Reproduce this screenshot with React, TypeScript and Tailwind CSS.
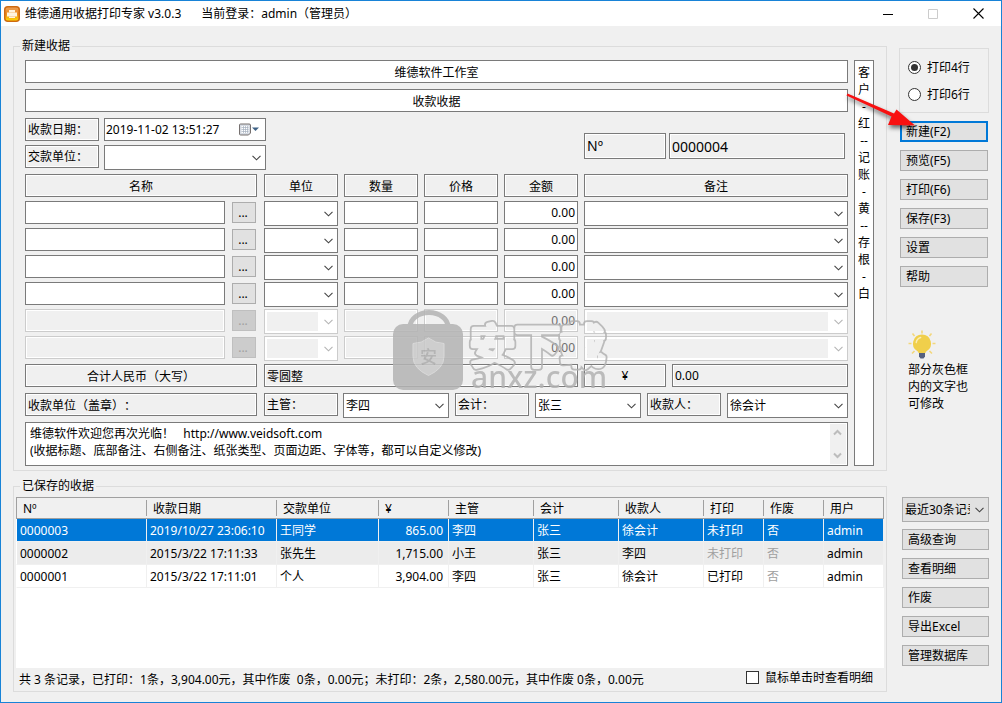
import { ReactNode } from 'react';

const box =
  'block min-w-0 rounded-none border border-[#7a7a7a] bg-[#f0f0f0] px-0.5 text-black shadow-[inset_0_0_0_1px_#fff] outline-none';
const field =
  'block min-w-0 rounded-none border border-[#7a7a7a] bg-white px-0.5 text-black outline-none disabled:border-[#ccc] disabled:bg-[#f0f0f0] disabled:text-[#6d6d6d] disabled:shadow-[inset_0_0_0_1px_#fff]';

function Chevron({ faded = false }: { faded?: boolean }) {
  return (
    <svg
      className="pointer-events-none absolute top-1/2 right-1 -mt-[3px]"
      width="9"
      height="6"
      viewBox="0 0 9 6"
      fill="none"
      stroke={faded ? '#b4b4b4' : '#444'}
      strokeWidth="1.1"
    >
      <path d="M0.5 0.8L4.5 4.800L8.500 0.8" />
    </svg>
  );
}

function Combo({
  label,
  id,
  options = [''],
  disabled = false,
  className = '',
}: {
  label?: string;
  id?: string;
  options?: string[];
  disabled?: boolean;
  className?: string;
}) {
  return (
    <div className={'relative h-[25px] border bg-white ' + (disabled ? 'border-[#ccc] ' : 'border-[#7a7a7a] ') + className}>
      <select
        id={id}
        aria-label={label}
        disabled={disabled}
        className={
          'block h-full w-full appearance-none rounded-none outline-none ' +
          (disabled
            ? 'border-2 border-r-[19px] border-white bg-[#f0f0f0] opacity-100'
            : 'bg-white pr-5 pl-0.5 text-black')
        }
      >
        {options.map((o) => (
          <option key={o}>{o}</option>
        ))}
      </select>
      <Chevron faded={disabled} />
    </div>
  );
}

function PushButton({ children, primary = false }: { children: ReactNode; primary?: boolean }) {
  return (
    <button
      type="button"
      className={
        'block h-[21px] w-full bg-[#e1e1e1] text-left leading-[18px] ' +
        (primary ? 'border-2 border-[#0078d7] px-1' : 'border border-[#adadad] px-[5px] pt-px')
      }
    >
      {children}
    </button>
  );
}

function TitleBar() {
  return (
    <header className="flex h-[25px] items-center bg-white pl-[3px]">
      <svg width="16" height="16" viewBox="0 0 16 16">
        <defs>
          <linearGradient id="appIcon" x1="0" y1="0" x2="0" y2="1">
            <stop offset="0" stopColor="#e9a05c" />
            <stop offset="0.5" stopColor="#f08a1c" />
            <stop offset="1" stopColor="#ffe100" />
          </linearGradient>
        </defs>
        <rect x="0.75" y="0.75" width="14.5" height="14.5" rx="3" fill="url(#appIcon)" stroke="#cf6a10" strokeWidth="1.5" />
        <path d="M5 4h6v2.500h2v4h-2v1.500H5v-1.500H3v-4h2z" fill="#fff3dc" />
        <path d="M5 6.500h6M5 10.500h6" stroke="#f5c58a" strokeWidth="0.6" />
      </svg>
      <h1 className="ml-[5px]">维德通用收据打印专家 v3.0.3</h1>
      <span className="ml-5">当前登录：admin（管理员）</span>
      <div className="ml-auto flex">
        <button type="button" aria-label="最小化" className="flex h-6 w-[46px] items-center justify-center">
          <svg width="10" height="10" viewBox="0 0 10 10"><path d="M0 5.500h10" stroke="#000" /></svg>
        </button>
        <button type="button" aria-label="最大化" disabled className="flex h-6 w-11 items-center justify-center">
          <svg width="10" height="10" viewBox="0 0 10 10"><path d="M0.500 0.500h9v9h-9z" fill="none" stroke="#ccc" /></svg>
        </button>
        <button type="button" aria-label="关闭" className="flex h-6 w-[46px] items-center justify-center">
          <svg width="11" height="11" viewBox="0 0 11 11"><path d="M0.500 0.500l10 10M10.500 0.500l-10 10" stroke="#000" strokeWidth="1.1" /></svg>
        </button>
      </div>
    </header>
  );
}

function ItemRow({ index }: { index: number }) {
  const disabled = index > 4;
  return (
    <div className="flex h-[25px] items-start">
      <input aria-label={`名称 ${index}`} disabled={disabled} className={field + ' h-[23px] w-[200px]'} />
      <button
        type="button"
        disabled={disabled}
        aria-label={`选择名称 ${index}`}
        className="mt-px ml-[7px] h-[21px] w-6 border border-[#adadad] bg-[#e1e1e1] pr-0.5 text-center leading-[19px] disabled:border-[#bfbfbf] disabled:bg-[#ccc] disabled:text-[#a0a0a0]"
      >
        ...
      </button>
      <Combo label={`单位 ${index}`} disabled={disabled} className="ml-2 w-[74px]" />
      <input aria-label={`数量 ${index}`} disabled={disabled} className={field + ' ml-1.5 h-[23px] w-[74px]'} />
      <input aria-label={`价格 ${index}`} disabled={disabled} className={field + ' ml-1.5 h-[23px] w-[74px]'} />
      <input
        aria-label={`金额 ${index}`}
        disabled={disabled}
        defaultValue="0.00"
        className={field + ' ml-1.5 h-[23px] w-[74px] text-right'}
      />
      <Combo label={`备注 ${index}`} disabled={disabled} className="ml-1.5 flex-1" />
    </div>
  );
}

function ReceiptForm() {
  const head = box + ' h-[23px] text-center';
  return (
    <fieldset className="min-w-0 flex-1 border border-[#dcdcdc]">
      <legend className="ml-1.5 h-4 px-0.5 leading-4">新建收据</legend>
      <div className="flex gap-1.5 pt-1.5 pr-3 pb-1 pl-[11px]">
        <div className="min-w-0 flex-1">
          <input aria-label="单位名称" defaultValue="维德软件工作室" className={field + ' h-[23px] w-full text-center'} />
          <input aria-label="收据标题" defaultValue="收款收据" className={field + ' mt-1.5 h-[23px] w-full text-center'} />

          <div className="mt-1.5 flex">
            <div className="w-[559px] shrink-0">
              <div className="flex gap-[5px]">
                <label htmlFor="date" className={box + ' h-[23px] w-[74px] leading-[21px]'}>收款日期：</label>
                <div className="flex h-[23px] w-[162px] items-center border border-[#7a7a7a] bg-white">
                  <input id="date" defaultValue="2019-11-02 13:51:27" className="w-[134px] bg-white pl-px outline-none" />
                  <button type="button" aria-label="打开日历" className="flex items-center">
                    <svg width="21" height="13" viewBox="0 0 21 13">
                      <path d="M1.500 1h8.500q1.500 0 1.500 1v8l-2 2h-8q-1 0-1-1v-9q0-1 1-1z" fill="#d5dae2" stroke="#76706f" />
                      <path d="M2.500 3h7v7h-7z" fill="#fff" />
                      <path d="M2.500 4.500h7M2.500 6.500h7M2.500 8.500h7M4.500 3v7M6.500 3v7M8.500 3v7" stroke="#a5b0bf" strokeWidth="0.7" />
                      <path d="M13 4.500h7l-3.500 3.500z" fill="#3f6286" />
                    </svg>
                  </button>
                </div>
              </div>
              <div className="mt-1 flex gap-[5px]">
                <label htmlFor="payer" className={box + ' h-[23px] w-[74px] leading-[21px]'}>交款单位：</label>
                <Combo id="payer" className="w-[162px]" />
              </div>
            </div>
            <div className="mt-[15px] flex min-w-0 flex-1 gap-[3px] pr-[3px] text-sm">
              <label htmlFor="number" className={box + ' h-[26px] w-[82px] shrink-0 leading-6'}>Nº</label>
              <input id="number" readOnly defaultValue="0000004" className={box + ' h-[26px] w-0 flex-1'} />
            </div>
          </div>

          <div className="mt-1 flex gap-1.5">
            <input aria-label="名称标题" defaultValue="名称" className={head + ' mr-px w-[232px]'} />
            <input aria-label="单位标题" defaultValue="单位" className={head + ' w-[74px]'} />
            <input aria-label="数量标题" defaultValue="数量" className={head + ' w-[74px]'} />
            <input aria-label="价格标题" defaultValue="价格" className={head + ' w-[74px]'} />
            <input aria-label="金额标题" defaultValue="金额" className={head + ' w-[74px]'} />
            <input aria-label="备注标题" defaultValue="备注" className={head + ' flex-1'} />
          </div>

          <div className="mt-1 flex flex-col gap-0.5">
            {[1, 2, 3, 4, 5, 6].map((i) => (
              <ItemRow key={i} index={i} />
            ))}
          </div>

          <div className="mt-[3px] flex gap-1.5">
            <input aria-label="合计标题" defaultValue="合计人民币（大写）" className={head + ' mr-px w-[232px]'} />
            <input aria-label="大写金额" readOnly defaultValue="零圆整" className={box + ' h-[23px] w-[314px]'} />
            <input aria-label="货币符号" defaultValue="¥" className={head + ' w-[82px]'} />
            <input aria-label="合计金额" readOnly defaultValue="0.00" className={box + ' h-[23px] flex-1'} />
          </div>

          <div className="mt-1.5 flex gap-[5px]">
            <input aria-label="收款单位" defaultValue="收款单位（盖章）：" className={box + ' mr-0.5 h-[23px] w-[232px]'} />
            <label htmlFor="manager" className={box + ' h-[23px] w-[74px] leading-[21px]'}>主管：</label>
            <Combo id="manager" options={['李四']} className="mr-px w-[106px]" />
            <label htmlFor="accountant" className={box + ' mr-px h-[23px] w-[74px] leading-[21px]'}>会计：</label>
            <Combo id="accountant" options={['张三']} className="mr-px w-[106px]" />
            <label htmlFor="payee" className={box + ' mr-px h-[23px] w-[74px] leading-[21px]'}>收款人：</label>
            <Combo id="payee" options={['徐会计']} className="flex-1" />
          </div>

          <div className="mt-1 flex h-11 border border-[#7a7a7a] bg-white">
            <textarea
              aria-label="底部备注"
              className="block h-full flex-1 resize-none overflow-hidden bg-white pt-0.5 pl-1 leading-[17px] outline-none"
              defaultValue={
                '维德软件欢迎您再次光临！   http://www.veidsoft.com\n(收据标题、底部备注、右侧备注、纸张类型、页面边距、字体等，都可以自定义修改)'
              }
            />
            <div className="m-px flex w-4 flex-col items-center justify-between bg-[#f0f0f0] py-[5px] pr-px">
              <svg width="9" height="7" viewBox="0 0 9 7" fill="none" stroke="#bcbcbc" strokeWidth="2"><path d="M1 5.500L4.500 2L8 5.500" /></svg>
              <svg width="9" height="7" viewBox="0 0 9 7" fill="none" stroke="#bcbcbc" strokeWidth="2"><path d="M1 1.500L4.500 5L8 1.500" /></svg>
            </div>
          </div>
        </div>
        <textarea
          aria-label="右侧备注"
          className="block w-5 resize-none overflow-hidden border border-[#7a7a7a] bg-white pt-[3px] text-center leading-[17px] outline-none"
          defaultValue={'客\n户\n-\n红\n--\n记\n账\n-\n黄\n--\n存\n根\n-\n白'}
        />
      </div>
    </fieldset>
  );
}

function Bulb() {
  return (
    <svg width="28" height="29" viewBox="0 0 28 29">
      <g stroke="#f3d77c" strokeWidth="1.6">
        <path d="M14 0.500v3M4.500 3.500l2 2.500M23.500 3.500l-2 2.500M0.500 13.500h3M24.500 13.500h3M4 23.500l2.500-2.500M24 23.500l-2.500-2.500" />
      </g>
      <path d="M14 4.500a9 9 0 0 1 4.500 16.800q-1 .7-1 1.700h-7q0-1-1-1.700A9 9 0 0 1 14 4.500z" fill="#f0cf4b" />
      <path d="M8.200 12.500q.8-4 4.500-5" fill="none" stroke="#fbeeb5" strokeWidth="1.4" strokeLinecap="round" />
      <path d="M11 23h6v3.500l-1.500 2h-3l-1.500-2z" fill="#556080" />
    </svg>
  );
}

function RadioLine({ label, checked = false }: { label: string; checked?: boolean }) {
  return (
    <label className="flex items-center gap-1.5">
      <span className="relative block h-[13px] w-[13px]">
        <input
          type="radio"
          name="lines"
          defaultChecked={checked}
          className="peer block h-[13px] w-[13px] appearance-none rounded-full border border-[#333] bg-white"
        />
        <span className="pointer-events-none absolute inset-[3px] hidden rounded-full bg-[#333] peer-checked:block" />
      </span>
      {label}
    </label>
  );
}

function FormActions() {
  return (
    <aside className="w-[90px] shrink-0">
      <div className="mt-2.5 flex h-[65px] flex-col justify-center gap-2.5 border border-[#dcdcdc] pl-2 leading-[17px]">
        <RadioLine label="打印4行" checked />
        <RadioLine label="打印6行" />
      </div>
      <div className="mt-2 flex flex-col gap-2 px-px">
        <PushButton primary>新建(F2)</PushButton>
        <PushButton>预览(F5)</PushButton>
        <PushButton>打印(F6)</PushButton>
        <PushButton>保存(F3)</PushButton>
        <PushButton>设置</PushButton>
        <PushButton>帮助</PushButton>
      </div>
      <div className="mt-[43px] pl-[9px]">
        <Bulb />
        <p className="mt-0.5 w-[61px] leading-[17px]">部分灰色框内的文字也可修改</p>
      </div>
    </aside>
  );
}

const columns = [
  { title: 'Nº', width: 'w-[131px]' },
  { title: '收款日期', width: 'w-[130px]' },
  { title: '交款单位', width: 'w-[102px]' },
  { title: '¥', width: 'w-[70px]' },
  { title: '主管', width: 'w-[85px]' },
  { title: '会计', width: 'w-[85px]' },
  { title: '收款人', width: 'w-[85px]' },
  { title: '打印', width: 'w-[60px]' },
  { title: '作废', width: 'w-[60px]' },
  { title: '用户', width: 'w-auto' },
];

const receipts = [
  ['0000003', '2019/10/27 23:06:10', '王同学', '865.00', '李四', '张三', '徐会计', '未打印', '否', 'admin'],
  ['0000002', '2015/3/22 17:11:33', '张先生', '1,715.00', '小王', '张三', '李四', '未打印', '否', 'admin'],
  ['0000001', '2015/3/22 17:11:01', '个人', '3,904.00', '李四', '张三', '徐会计', '已打印', '否', 'admin'],
];

const rowStyles = ['bg-[#0078d7] text-white', 'bg-[#ececec]', 'bg-white'];

function SavedReceipts() {
  return (
    <fieldset className="flex min-w-0 flex-1 flex-col border border-[#dcdcdc]">
      <legend className="ml-1.5 h-4 px-0.5 leading-4">已保存的收据</legend>
      <div className="mx-0.5 mt-[3px] flex-1 bg-white">
        <table className="w-full table-fixed border-separate border-spacing-0">
          <thead>
            <tr className="h-[22px] bg-[#f0f0f0]">
              {columns.map((c, i) => (
                <th
                  key={c.title}
                  className={
                    'border-y border-[#a0a0a0] p-0 text-left font-normal first:border-l last:border-r ' + c.width
                  }
                >
                  <div className={'h-4 pl-1.5 leading-[18px] ' + (i < columns.length - 1 ? 'border-r border-[#a0a0a0]' : '')}>
                    {c.title}
                  </div>
                </th>
              ))}
            </tr>
          </thead>
          <tbody>
            {receipts.map((r, ri) => (
              <tr key={r[0]} className={'h-[23px] ' + rowStyles[ri]}>
                {r.map((v, ci) => (
                  <td
                    key={ci}
                    className={
                      'border-r border-b border-[#f0f0f0] pt-0.5 pr-[5px] pb-0 pl-[3px] leading-5 first:border-l first:border-l-white ' +
                      (ci === 3 ? 'text-right ' : '') +
                      (ri > 0 && (ci === 8 || v === '未打印') ? 'text-[#a0a0a0]' : '')
                    }
                  >
                    {v}
                  </td>
                ))}
              </tr>
            ))}
          </tbody>
        </table>
      </div>
      <div className="flex h-[23px] items-center justify-between pr-[13px] pl-[5px]">
        <p className="whitespace-pre">
          共 3 条记录，已打印：1条，3,904.00元，其中作废  0条，0.00元；未打印：2条，2,580.00元，其中作废 0条，0.00元
        </p>
        <label className="flex items-center gap-1.5 pb-1">
          <input type="checkbox" className="block h-[13px] w-[13px] appearance-none border border-[#333] bg-white" />
          鼠标单击时查看明细
        </label>
      </div>
    </fieldset>
  );
}

function SavedActions() {
  return (
    <aside className="w-[90px] shrink-0 pt-[19px] pl-[3px]">
      <div className="relative h-[25px] border border-[#adadad] bg-[#e1e1e1]">
        <select aria-label="记录范围" className="block h-full w-full appearance-none bg-transparent pr-[18px] pl-0.5 outline-none">
          <option>最近30条记录</option>
        </select>
        <Chevron />
      </div>
      <div className="mt-[7px] flex flex-col gap-2">
        <PushButton>高级查询</PushButton>
        <PushButton>查看明细</PushButton>
        <PushButton>作废</PushButton>
        <PushButton>导出Excel</PushButton>
        <PushButton>管理数据库</PushButton>
      </div>
    </aside>
  );
}

function Watermark() {
  return (
    <svg className="pointer-events-none absolute top-[307px] left-[389px]" width="222" height="88" viewBox="390 308 222 88">
      <defs>
        <mask id="hollow" maskUnits="userSpaceOnUse" x="390" y="308" width="222" height="88">
          <rect x="390" y="308" width="222" height="88" fill="#fff" />
          <text x="470" y="363" fontSize="45" fontWeight="500" fill="#000" stroke="#000" strokeWidth="4.500" strokeLinejoin="round">安下载</text>
        </mask>
      </defs>
      <g opacity="0.85">
        <path d="M410 327a19 14.500 0 0 1 38 0" fill="none" stroke="#b4b4b4" strokeWidth="5" />
        <rect x="393" y="324" width="70" height="66" rx="10" fill="#b4b4b4" />
        <path d="M428.500 338q7 5.500 15.500 5.500v13q0 12-15.500 19q-15.500-7-15.500-19v-13q8.500 0 15.500-5.500z" fill="#c9c9c9" stroke="#d6d6d6" />
        <text x="420" y="363" fontSize="17" fontWeight="500" fill="#aaa">安</text>
        <text x="470" y="363" fontSize="45" fontWeight="500" fill="#b2b2b2" stroke="#b2b2b2" strokeWidth="8" strokeLinejoin="round" mask="url(#hollow)">安下载</text>
        <text x="471" y="388" fontSize="30" fontWeight="500" fill="#b2b2b2">anxz.com</text>
      </g>
    </svg>
  );
}

function Arrow() {
  return (
    <svg
      className="pointer-events-none absolute top-[87px] right-[77px] drop-shadow-[1px_3px_2px_rgba(0,0,0,0.55)]"
      width="80"
      height="46"
      viewBox="844 88 80 46"
    >
      <path d="M847.500 93.500L894 113.500L896.500 109.500L915 125.500L888 125L891.500 116.500L846.500 95.500z" fill="#f81010" />
    </svg>
  );
}

export default function App() {
  return (
    <div className="relative flex min-h-screen min-w-[960px] flex-col border border-[#1883d7] bg-[#f0f0f0] font-['Noto_Sans','Noto_Sans_CJK_SC',sans-serif] text-xs text-black [text-spacing-trim:space-all]">
      <TitleBar />
      <main className="flex flex-1 flex-col gap-[7px] px-3 pt-3 pb-2.5">
        <div className="flex gap-3">
          <ReceiptForm />
          <FormActions />
        </div>
        <div className="flex flex-1 gap-3">
          <SavedReceipts />
          <SavedActions />
        </div>
      </main>
      <Watermark />
      <Arrow />
    </div>
  );
}
